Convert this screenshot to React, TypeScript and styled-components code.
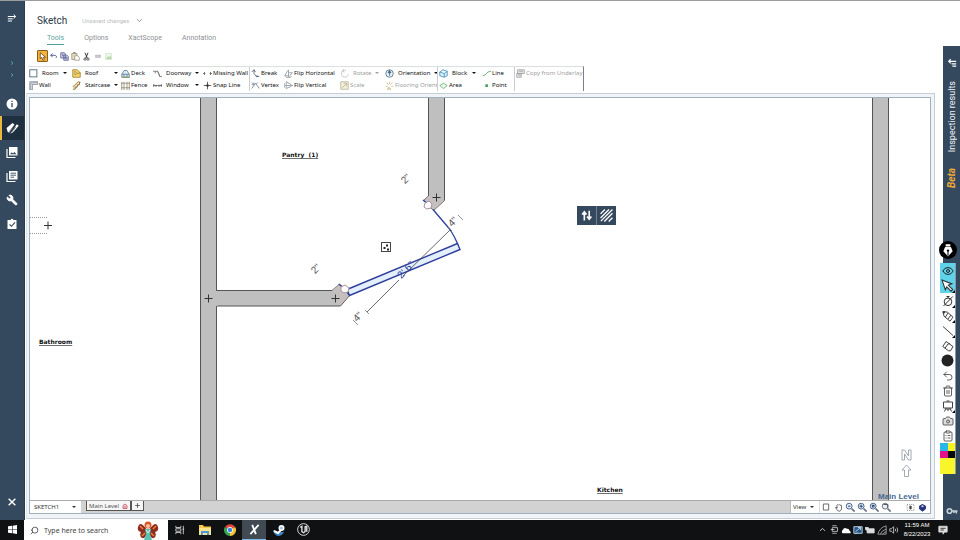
import React from "react";
import styled, { createGlobalStyle, css } from "styled-components";
import { Wrench, ChevronDown, ChevronUp, Trash2, Camera, ClipboardList, Eye, Undo2, Search } from "lucide-react";

const navy = "#34495e";
const ui = '"Noto Sans", "Open Sans", sans-serif';

const Global = createGlobalStyle`
  *, *::before, *::after { box-sizing: border-box; }
  html, body { margin: 0; height: 100%; overflow: hidden; }
  #root { height: 100%; }
  body { font-family: Roboto, sans-serif; background: #fff; }
  button, select, input { font: inherit; color: inherit; border: 0; padding: 0; margin: 0; background: none; border-radius: 0; }
  button { cursor: pointer; }
  svg { display: block; flex: none; }
`;

const Page = styled.div`
  height: 100vh;
  display: flex;
  flex-direction: column;
`;
const Workspace = styled.div`
  flex: 1;
  min-height: 0;
  display: flex;
  border-top: 1px solid #9a9c9e;
`;
const Rail = styled.nav`
  width: 25px;
  background: ${navy};
  color: #fff;
  display: flex;
  flex-direction: column;
  padding-bottom: 6px;
  border-right: 1px solid #2a3c4e;
`;
const RailButton = styled.button<{ $h?: number; $active?: boolean; $tint?: string }>`
  height: ${(p) => p.$h ?? 24}px;
  display: flex;
  align-items: center;
  justify-content: center;
  color: ${(p) => p.$tint ?? "#fff"};
  border-left: 2px solid transparent;
  border-right: 2px solid transparent;
  ${(p) => p.$active && css`
    background: #1e2f3f;
    border-left-color: #e8b93c;
    border-right-color: #1e2f3f;
  `}
`;
const RailGroup = styled.div`
  display: flex;
  flex-direction: column;
  padding-top: 22px;
  & + & { padding-top: 11px; }
`;
const Spacer = styled.div`
  flex: 1;
`;
const Center = styled.main`
  flex: 1;
  min-width: 0;
  display: flex;
  flex-direction: column;
`;
const TitleRow = styled.header`
  height: 28px;
  padding: 11px 0 0 12px;
  display: flex;
  align-items: center;
  gap: 15px;
`;
const Title = styled.h1`
  margin: 0;
  font-size: 10px;
  line-height: 16px;
  font-weight: 400;
  color: #2b3946;
`;
const SaveState = styled.button`
  display: flex;
  align-items: center;
  gap: 6px;
  font-size: 6px;
  color: #b9bcc0;
`;
const Tabs = styled.nav`
  height: 20px;
  padding: 4px 0 0 22px;
  display: flex;
  align-items: flex-start;
  gap: 20px;
`;
const Tab = styled.a<{ $on?: boolean }>`
  font-size: 7px;
  line-height: 11px;
  text-decoration: none;
  color: ${(p) => (p.$on ? "#5fa3a3" : "#8d9194")};
  border-bottom: 1px solid ${(p) => (p.$on ? "#4f9d9d" : "transparent")};
`;
const QuickBar = styled.div`
  height: 17px;
  padding: 0 0 3px 12px;
  display: flex;
  align-items: center;
`;
const QuickButton = styled.button<{ $on?: boolean }>`
  width: 11px;
  height: 12px;
  display: flex;
  align-items: center;
  justify-content: center;
  ${(p) => p.$on && css`
    background: #f3b13d;
    border: 1px solid #8a5d18;
    border-radius: 1px;
  `}
`;
const Ribbon = styled.div`
  height: 25px;
  display: flex;
  align-self: flex-start;
  margin-left: 3px;
  border-top: 1px solid #dcdfe2;
  border-right: 1px solid #7d7f82;
`;
const RibbonGroup = styled.div`
  display: flex;
  & + & { border-left: 1px solid #c9cdd1; }
`;
const RibbonColumn = styled.div<{ $w: number }>`
  width: ${(p) => p.$w}px;
  display: grid;
  grid-template-rows: 12px 12px;
`;
const RibbonButton = styled.button<{ $split?: boolean }>`
  display: flex;
  align-items: center;
  gap: ${(p) => (p.$split ? 4 : 1)}px;
  padding-left: 1px;
  font-family: ${ui};
  font-size: 6px;
  line-height: 12px;
  white-space: nowrap;
  color: #111;
  &:disabled { color: #a0a0a0; }
`;
const Caret = styled.span`
  margin-left: auto;
  margin-right: 5px;
  border: 2px solid transparent;
  border-top-color: currentColor;
  border-bottom: 0;
`;
const Frame = styled.section`
  flex: 1;
  min-height: 0;
  margin: 2px 8px 1px 1px;
  padding: 3px 3px 4px 2px;
  border: 1px solid #c3ced8;
  border-left-color: #dde4ea;
  background: #f1f4f7;
  display: flex;
`;
const FrameInner = styled.div`
  flex: 1;
  min-width: 0;
  border: 1px solid #9fb0bf;
  background: #fff;
  display: flex;
  flex-direction: column;
`;
const Canvas = styled.div`
  position: relative;
  flex: 1;
  min-height: 0;
  overflow: hidden;
`;
const Plan = styled.svg`
  width: 100%;
  height: 100%;
`;
const FloatBar = styled.div`
  position: absolute;
  left: 547px;
  top: 108px;
  display: flex;
  background: ${navy};
`;
const FloatButton = styled.button`
  width: 19px;
  height: 19px;
  display: flex;
  align-items: center;
  justify-content: center;
  color: #fff;
  & + & { width: 20px; border-left: 1px solid #73808c; }
`;
const StatusBar = styled.footer`
  height: 13px;
  display: flex;
  align-items: stretch;
  background: #d2d2d2;
  border-top: 1px solid #aaa;
  font-family: ${ui};
  font-size: 6px;
  color: #333;
`;
const SheetPicker = styled.label`
  display: flex;
  align-items: center;
  position: relative;
  width: 51px;
  margin-right: 5px;
  background: #fff;
  select { appearance: none; width: 100%; height: 100%; padding-left: 4px; outline: 0; }
`;
const PickerCaret = styled(Caret)`
  position: absolute;
  right: 0;
  pointer-events: none;
`;
const SheetTab = styled.button`
  display: flex;
  align-items: center;
  justify-content: center;
  gap: 3px;
  height: 10px;
  padding: 0 2px;
  background: #f6f6f6;
  border: 1px solid #555;
  border-top: 0;
  color: #555;
`;
const ViewTools = styled.div`
  margin-left: auto;
  width: 140px;
  padding-right: 2px;
  background: #fff;
  border-left: 1px solid #bbb;
  display: flex;
  align-items: center;
`;
const ViewButton = styled.button`
  width: 29px;
  height: 12px;
  padding-left: 2px;
  display: flex;
  align-items: center;
  border-right: 1px solid #ddd;
`;
const ViewIcon = styled.button`
  width: 12px;
  height: 12px;
  display: flex;
  align-items: center;
  justify-content: center;
`;
const ResultsRail = styled.aside`
  width: 17px;
  margin-top: 45px;
  background: ${navy};
  color: #fff;
  display: flex;
  flex-direction: column;
  align-items: center;
  padding: 12px 0 3px;
`;
const ResultsButton = styled.button`
  display: flex;
  flex-direction: column;
  align-items: center;
  gap: 13px;
`;
const Vertical = styled.span<{ $beta?: boolean }>`
  writing-mode: vertical-rl;
  transform: rotate(180deg);
  font-size: ${(p) => (p.$beta ? 10 : 9)}px;
  line-height: 12px;
  font-weight: ${(p) => (p.$beta ? 700 : 400)};
  font-style: ${(p) => (p.$beta ? "italic" : "normal")};
  color: ${(p) => (p.$beta ? "#e9a93a" : "#eef1f4")};
  margin-top: ${(p) => (p.$beta ? 3 : 0)}px;
`;
const Palette = styled.div`
  position: absolute;
  right: 4px;
  top: 241px;
  width: 16px;
  display: flex;
  flex-direction: column;
  align-items: center;
`;
const PaletteHandle = styled.button`
  width: 18px;
  height: 18px;
  margin-bottom: 4px;
  border-radius: 50%;
  background: #000;
  display: flex;
  align-items: center;
  justify-content: center;
`;
const PaletteList = styled.div`
  width: 100%;
  background: #fdfdfd;
  border-right: 1px solid #8a99a6;
`;
const PaletteTool = styled.button<{ $on?: boolean }>`
  width: 100%;
  height: 15px;
  display: flex;
  align-items: center;
  justify-content: center;
  position: relative;
  color: #444;
  background: ${(p) => (p.$on ? "#5fd3ea" : "transparent")};
`;
const Corner = styled.i`
  position: absolute;
  right: 0;
  bottom: 0;
  border-left: 3px solid transparent;
  border-bottom: 3px solid #000;
`;
const Swatches = styled.div`
  display: grid;
  grid-template-columns: 1fr 1fr;
  grid-template-rows: 8px 7px 16px;
`;
const Swatch = styled.button<{ $c: string; $wide?: boolean }>`
  background: ${(p) => p.$c};
  ${(p) => p.$wide && css`grid-column: span 2;`}
`;
const Taskbar = styled.footer`
  height: 20px;
  background: #101112;
  color: #fff;
  display: flex;
  align-items: stretch;
  font-family: ${ui};
`;
const TaskButton = styled.button<{ $w: number; $on?: boolean }>`
  width: ${(p) => p.$w}px;
  display: flex;
  align-items: center;
  justify-content: center;
  background: ${(p) => (p.$on ? "#414a52" : "transparent")};
  border-bottom: 1px solid ${(p) => (p.$on ? "#76b9ed" : "transparent")};
`;
const SearchBox = styled.label`
  width: 144px;
  padding: 0 9px 0 6px;
  background: #fff;
  color: #333;
  display: flex;
  align-items: center;
  gap: 5px;
  font-size: 7px;
  input { flex: 1; min-width: 0; outline: 0; }
  input::placeholder { color: #444; opacity: 1; }
`;
const Tray = styled.div`
  margin-left: auto;
  display: flex;
  align-items: stretch;
`;
const Clock = styled.button`
  width: 34px;
  margin-right: 2px;
  font-family: "Liberation Sans", sans-serif;
  font-size: 6px;
  line-height: 9px;
  text-align: center;
  display: flex;
  flex-direction: column;
  justify-content: center;
  align-items: center;
  white-space: nowrap;
`;

type DrawProps = { s?: number; w?: number; c?: string; children: React.ReactNode };
/* Small line drawings share a 12-unit grid. */
const Draw = ({ s = 9, w = 1, c = "currentColor", children }: DrawProps) => (
  <svg width={s} height={s} viewBox="0 0 12 12" fill="none" stroke={c} strokeWidth={w} aria-hidden="true">
    {children}
  </svg>
);

const MenuArrows = () => (
  <Draw s={10} w={1.2}>
    <path d="M1 4.2h9M8 1.8l2.5 2.4L8 6.6M1 7h6M1 9.6h5" />
  </Draw>
);

const icons: Record<string, React.ReactNode> = {
  room: <Draw c="#5f7488" w={1.3}><rect x="1" y="1" width="9.5" height="9.5" /></Draw>,
  wall: <Draw c="#6c7c8c"><path d="M2.500 12V2.500H12M1 1h11v3.500H4.500V12H1z" /></Draw>,
  roof: <Draw c="#9a7420"><path d="M1 1h6l4 4v6H1z" fill="#f5d667" /><path d="M4 3v5l3-2zM7 6l4-1" fill="#fff" /></Draw>,
  stairs: <Draw c="#8f6c3a"><path d="M1 11h3V8h3V5h3V1M1 8l7-7 3 1-7 9" fill="#eed69d" /></Draw>,
  deck: <Draw c="#4e7390"><path d="M1 7l3-5h4l3 5v4H1zM1 7h10M4 7v4M8 7v4" fill="#dcecf3" /><path d="M1 11h11" stroke="#85994b" /></Draw>,
  fence: <Draw c="#8c8268"><path d="M1 1v11M4 1v11M8 1v11M11 1v11M0 3h12M0 9h12" fill="#eee2bb" /></Draw>,
  door: <Draw c="#666"><path d="M0 3h3v3M3 3c4 0 5 3 6 7M6 2l3 8h3" /></Draw>,
  window: <Draw c="#555"><path d="M0 6h12M1 4v4M4 5v3M8 5v3M11 4v4" /></Draw>,
  missing: <Draw c="#555"><path d="M0 6h3M2 4v4M9 6h3M10 4v4" /></Draw>,
  snap: <Draw c="#333"><path d="M6 1v10M1 6h10" /><path d="M5 5h2v2H5z" fill="#333" /></Draw>,
  break: <Draw c="#445266"><path d="M1 4l3-3 2 3M4 1v5l3 4h4M8 8v3" /></Draw>,
  vertex: <Draw c="#65758a"><path d="M1 10l5-7 5 7M1 2l3 3M4 2v3H1M9 2l-2 2" /></Draw>,
  fliph: <Draw c="#7d8a95"><path d="M6 1v10M5 9H1l4-7M7 5h4l-4 5M2 10c2 2 6 2 8 0" /></Draw>,
  flipv: <Draw c="#7d8a95"><path d="M1 6h11M3 5V1l7 4M3 7v3l7-3M1 3c-1 2-1 4 0 6" /></Draw>,
  rotate: <Draw c="#bbb"><path d="M8 2a4.5 4.5 0 1 0 3 5M5 0L3 3l3 1" /></Draw>,
  scale: <Draw c="#b5ad94"><path d="M1 1h10v10H1zM3 9l6-6M5 3h4v4" fill="#f2efd9" /></Draw>,
  orient: <Draw c="#40617d"><circle cx="6" cy="6" r="5" fill="#e5f1f8" /><path d="M6 9V3M4 5l2-3 2 3z" fill="#24486b" /></Draw>,
  floor: <Draw c="#c9b98c"><path d="M2 2l3 3M6 1v3M10 2L7 5M1 7h3M8 7h3M3 11l2-3 3 3z" fill="#eee2bb" /></Draw>,
  block: <Draw c="#3686b5"><path d="M1 4l4-3 6 2v6l-4 2-6-2zM1 4l6 2 4-3M7 6v5" fill="#d9eff8" /></Draw>,
  area: <Draw c="#54ac67"><path d="M1 6l5-3 5 3-5 4z" fill="#ecf8ee" /></Draw>,
  line: <Draw c="#439d60"><path d="M1 9l3-1 4-4 4-1" /></Draw>,
  point: <Draw c="#439d60"><rect x="5" y="5" width="2.5" height="2.5" fill="#439d60" /></Draw>,
  copy: <Draw c="#999"><path d="M2 1h9v5H2zM1 6h6v5H1zM4 3h5M3 8h3" fill="#e5e5e5" /></Draw>,
};

type Item = { label: string; icon: string; split?: boolean; off?: boolean };
const ribbon: { w: number; items: Item[] }[][] = [
  [
    { w: 43, items: [{ label: "Room", icon: "room", split: true }, { label: "Wall", icon: "wall" }] },
    { w: 49, items: [{ label: "Roof", icon: "roof", split: true }, { label: "Staircase", icon: "stairs", split: true }] },
    { w: 32, items: [{ label: "Deck", icon: "deck" }, { label: "Fence", icon: "fence" }] },
    { w: 50, items: [{ label: "Doorway", icon: "door", split: true }, { label: "Window", icon: "window", split: true }] },
    { w: 47, items: [{ label: "Missing Wall", icon: "missing" }, { label: "Snap Line", icon: "snap" }] },
  ],
  [
    { w: 33, items: [{ label: "Break", icon: "break" }, { label: "Vertex", icon: "vertex" }] },
    { w: 56, items: [{ label: "Flip Horizontal", icon: "fliph" }, { label: "Flip Vertical", icon: "flipv" }] },
    { w: 45, items: [{ label: "Rotate", icon: "rotate", split: true, off: true }, { label: "Scale", icon: "scale", off: true }] },
    { w: 53, items: [{ label: "Orientation", icon: "orient", split: true }, { label: "Flooring Orient", icon: "floor", off: true }] },
  ],
  [
    { w: 43, items: [{ label: "Block", icon: "block", split: true }, { label: "Area", icon: "area" }] },
    { w: 33, items: [{ label: "Line", icon: "line" }, { label: "Point", icon: "point" }] },
  ],
  [{ w: 68, items: [{ label: "Copy from Underlay", icon: "copy", off: true }] }],
];

const Cross = ({ x, y }: { x: number; y: number }) => (
  <path d={`M${x - 4} ${y}h8M${x} ${y - 4}v8`} stroke="#333" fill="none" />
);
const Dim = ({ x, y, children, c = "#555" }: { x: number; y: number; children: string; c?: string }) => (
  <text x={x} y={y + 3} transform={`rotate(-45 ${x} ${y})`} textAnchor="middle" fontSize="10" fontFamily="Liberation Sans" fill={c}>
    {children}
  </text>
);
const RoomName = ({ x, y, children }: { x: number; y: number; children: string }) => (
  <text x={x} y={y} fontSize="6" fontWeight="700" fontFamily="DejaVu Sans, sans-serif" fill="#111" textDecoration="underline">
    {children}
  </text>
);

const FloorPlan = () => (
  <Plan viewBox="30 98 900 402" preserveAspectRatio="xMinYMin slice" role="img" aria-label="Floor plan">
    <g fill="#bfbfbf" stroke="#555">
      <path d="M200.5 90v420h16V90z" />
      <path d="M872.5 90v420h16V90z" />
      <path d="M216.5 290.5H332l7-6 10.500 11-9 10.500H216.500" />
      <path d="M428.500 90v106l-5 4.500 10 10 11-10V90z" />
    </g>
    <path d="M216.500 291v15" stroke="#bfbfbf" strokeWidth="2" />
    <path d="M332 290l7-6 10.500 11-9 10.500zM428.500 196l-5 4.500 10 10 11-10z" fill="#cbbfc0" opacity=".6" />
    <path d="M30 217.500h18M30 233.500h18" stroke="#999" strokeDasharray="1 1" />
    <Cross x={48} y={225.5} />
    <Cross x={208.5} y={298.5} />
    <Cross x={335.5} y={298.5} />
    <Cross x={436.5} y={197.5} />
    <path d="M347 289.500L457.500 243.500l2.500 6L349.500 295.500z" fill="#e3effa" stroke="#2e3f9c" strokeWidth="1.400" />
    <path d="M433 209.500l17 20q4 6 7.500 14M423 200l6 5M339 284l6 5 4 6" fill="none" stroke="#2e3f9c" strokeWidth="1.300" />
    <path d="M367 312l32-32M403 276l47-46" stroke="#444" strokeWidth=".8" />
    <path d="M365 310l4 4M448 227l4 4M353 320l5 5M458 215l5 5" stroke="#777" strokeWidth=".8" />
    <path d="M341 287l4-2 4 3-1 4-4 1-3-2zM425 203l4-2 3 3-1 4-4 1-3-2z" fill="#fff" stroke="#a98f9c" />
    <Dim x={406} y={179}>2"</Dim>
    <Dim x={316} y={269}>2"</Dim>
    <Dim x={358} y={317}>4"</Dim>
    <Dim x={453} y={222}>4"</Dim>
    <Dim x={406} y={270} c="#2e3f9c">2' 6"</Dim>
    <rect x="381.500" y="242.500" width="9" height="9" fill="#fff" stroke="#444" />
    <path d="M386 244.500h2v2h-2zM383.500 247h2v2h-2zM387 248.500h2v2h-2z" fill="#222" />
    <RoomName x={282} y={157}>{"Pantry\u00a0\u00a0(1)"}</RoomName>
    <RoomName x={39} y={344}>Bathroom</RoomName>
    <RoomName x={597} y={492}>Kitchen</RoomName>
    <g fill="#fff" stroke="#8b96a2" strokeWidth=".8">
      <path d="M902 460v-10h2.500l4 6v-6h2.500v10h-2.500l-4-6v6z" />
      <path d="M906.500 465l4.500 5h-2.500v6.500h-4V470H902z" />
    </g>
    <text x="878" y="499" fontSize="8" fontWeight="700" fontFamily="Liberation Sans" fill="#456a90">Main Level</text>
  </Plan>
);

const Lens = ({ mark, c = "#2e4a7d" }: { mark: string; c?: string }) => (
  <Draw s={10} c={c}>
    <circle cx="5" cy="5" r="3.500" fill="#e8f1f7" />
    <path d="M8 8l3.500 3.500" strokeWidth="2" stroke="#6d7486" />
    <path d={mark} strokeWidth="1.300" />
  </Draw>
);

export default function App() {
  return (
    <Page>
      <Global />
      <Workspace>
        <Rail aria-label="Project">
          <RailButton $h={34} aria-label="Expand menu"><MenuArrows /></RailButton>
          <RailGroup>
            {[0, 1].map((i) => (
              <RailButton key={i} $h={12} $tint="#4fa6c4" aria-label="Expand section">
                <Draw s={8} w={1.3}><path d="M4.500 3.500L7.500 6l-3 2.500" /></Draw>
              </RailButton>
            ))}
          </RailGroup>
          <RailGroup>
            <RailButton aria-label="Information">
              <Draw s={12} c="none">
                <circle cx="6" cy="6" r="5.500" fill="#fff" />
                <path d="M5.400 2.800h1.300v1.300H5.400zM5.400 5h1.300v4.200H5.400z" fill={navy} />
              </Draw>
            </RailButton>
            <RailButton $active aria-label="Sketch">
              <Draw s={13} c="none">
                <path d="M.5 5.500L6 1l2 1.500-5 7.500-1.500-1zM4 10.800L10 2l1.800 1.500L6.500 9.500z" fill="#fff" />
                <path d="M3 9l5.500-7M5 9.500l4-5" stroke="#1e2f3f" strokeWidth=".6" />
              </Draw>
            </RailButton>
            <RailButton aria-label="Images">
              <Draw s={12} c="none">
                <path d="M3 1h8.500v8.500H3z" fill="#fff" />
                <path d="M1 3v8.500h8.500" stroke="#fff" strokeWidth="1.200" />
                <path d="M4 8.200l1.800-2 1.200 1.200L8.500 6l2 2.200z" fill={navy} />
              </Draw>
            </RailButton>
            <RailButton aria-label="Notes">
              <Draw s={12} c="none">
                <path d="M3 1h8.500v8.500H3z" fill="#fff" />
                <path d="M1 3v8.500h8.500" stroke="#fff" strokeWidth="1.200" />
                <path d="M4.500 3.200H10M4.500 5.200H10M4.500 7.200H8" stroke={navy} strokeWidth=".9" />
              </Draw>
            </RailButton>
            <RailButton aria-label="Tools"><Wrench size={12} fill="#fff" strokeWidth={1.5} transform="scale(-1 1)" /></RailButton>
            <RailButton aria-label="Tasks">
              <Draw s={12} c="none">
                <path d="M1.500 2H4.500Q6-.5 7.500 2H10.500V11H1.500z" fill="#fff" />
                <path d="M3.500 6.300l2 2 3.500-4" stroke={navy} strokeWidth="1.100" />
              </Draw>
            </RailButton>
          </RailGroup>
          <Spacer />
          <RailButton aria-label="Close"><Draw s={10} w={1.700}><path d="M2 2l8 8M10 2l-8 8" /></Draw></RailButton>
        </Rail>

        <Center>
          <TitleRow>
            <Title>Sketch</Title>
            <SaveState>Unsaved changes <ChevronDown size={9} color="#777" /></SaveState>
          </TitleRow>
          <Tabs>
            <Tab href="#tools" $on>Tools</Tab>
            <Tab href="#options">Options</Tab>
            <Tab href="#xactscope">XactScope</Tab>
            <Tab href="#annotation">Annotation</Tab>
          </Tabs>
          <QuickBar role="toolbar" aria-label="Quick actions">
            <QuickButton $on aria-label="Select"><Draw s={9} c="#5e3c0c"><path d="M3 1v8l2-2 1.500 4 2-1L7 7h3z" fill="#fff" /></Draw></QuickButton>
            <QuickButton aria-label="Undo"><Draw s={8} c="#45508c" w={1.300}><path d="M4 2.500L1 5l3 2.500M1 5h7q3 1 1 4" /></Draw></QuickButton>
            <QuickButton aria-label="Copy"><Draw c="#4b528a"><path d="M1 1h5l1 1v6H1zM5 4h4l2 2v5H5z" fill="#d6daf0" /><path d="M6.500 7H10M6.500 9H10M2.500 3h2M2.500 5h2" /></Draw></QuickButton>
            <QuickButton aria-label="Paste"><Draw c="#91917c"><path d="M1 2h7v8H1z" fill="#e3ddb8" /><path d="M5 5h4l2 2v4H5z" fill="#fff" /><path d="M3 1h3" strokeWidth="2" /></Draw></QuickButton>
            <QuickButton aria-label="Cut"><Draw c="#333"><path d="M4 1l3 7M8 1L5 8" strokeWidth="1.300" /><circle cx="4" cy="9.500" r="1.500" /><circle cx="8" cy="9.500" r="1.500" /></Draw></QuickButton>
            <QuickButton aria-label="Find"><Draw s={6} c="#aaa9bb"><path d="M1 4h4v5H1zM7 4h4v5H7zM5 6h2" fill="#ccc" /></Draw></QuickButton>
            <QuickButton aria-label="Picture"><Draw s={7} c="#c5dfbd"><path d="M1 1h10v10H1z" fill="#eff8ea" /><path d="M2 10l3-4 2 2 2-3 2 5z" fill="#9bd08f" /></Draw></QuickButton>
          </QuickBar>
          <Ribbon role="toolbar" aria-label="Sketch tools">
            {ribbon.map((group, g) => (
              <RibbonGroup key={g}>
                {group.map((col, c) => (
                  <RibbonColumn key={c} $w={col.w}>
                    {col.items.map((it) => (
                      <RibbonButton key={it.label} $split={it.split} disabled={it.off}>
                        {icons[it.icon]}
                        {it.label}
                        {it.split && <Caret />}
                      </RibbonButton>
                    ))}
                  </RibbonColumn>
                ))}
              </RibbonGroup>
            ))}
          </Ribbon>

          <Frame>
            <FrameInner>
              <Canvas>
                <FloorPlan />
                <FloatBar>
                  <FloatButton aria-label="Flip opening">
                    <Draw s={13} w={1.500}><path d="M4 10.500V3M2 5l2-2.500L6 5M8.500 1.500V9M6.500 7l2 2.500 2-2.500" /></Draw>
                  </FloatButton>
                  <FloatButton aria-label="Hatch">
                    <Draw s={13} w={1.200}><path d="M.5 4.500l4-4M.5 8.300L8.300.5M.8 11.200L11.500.5M4 11.500L11.500 4M8 11.500L11.500 8" /></Draw>
                  </FloatButton>
                </FloatBar>
              </Canvas>
              <StatusBar>
                <SheetPicker>
                  <select aria-label="Sketch sheet" defaultValue="SKETCH1"><option>SKETCH1</option></select>
                  <PickerCaret />
                </SheetPicker>
                <SheetTab>Main Level <Draw s={6} w={1.500} c="#c2485a"><path d="M2 5l4-3 4 3v6H2z" fill="#f4d4d8" /><path d="M4 8h4" /></Draw></SheetTab>
                <SheetTab aria-label="Add level"><Draw s={7} w={1.500}><path d="M6 2v8M2 6h8" /></Draw></SheetTab>
                <ViewTools>
                  <ViewButton>View <Caret /></ViewButton>
                  <ViewIcon aria-label="Frame"><Draw s={8} c="#555" w={1.300}><path d="M2 1.500h8v9H2z" /></Draw></ViewIcon>
                  <ViewIcon aria-label="Pan"><Draw c="#444"><path d="M2 6q2-1 2 1V3q1-2 2 0 1-2 2 0 2-1 2 1v4q-1 3-3 3t-3-2z" /></Draw></ViewIcon>
                  <ViewIcon aria-label="Zoom out"><Lens mark="M3.500 5h3" /></ViewIcon>
                  <ViewIcon aria-label="Zoom in"><Lens mark="M3 5h4M5 3v4" /></ViewIcon>
                  <ViewIcon aria-label="Zoom extents"><Lens mark="M4 4h2v2H4z" /></ViewIcon>
                  <ViewIcon aria-label="Zoom window"><Lens c="#555a66" mark="M3 3h5v4" /></ViewIcon>
                  <ViewIcon aria-label="Layers" />
                  <ViewIcon aria-label="Center"><Draw s={9} c="#555"><path d="M1.500 2h9v8h-9z" strokeDasharray="1 1.500" /><path d="M5 4h2v4H5z" fill="#333" /></Draw></ViewIcon>
                  <ViewIcon aria-label="3D"><Draw s={9} c="#1f2c70"><path d="M2 4l4-2 4 2v4l-4 3-4-3z" fill="#26348a" /><path d="M2.500 4l3.500 2 3.500-2L6 2.500z" fill="#dfe3f7" /></Draw></ViewIcon>
                </ViewTools>
              </StatusBar>
            </FrameInner>
          </Frame>
        </Center>

        <ResultsRail>
          <ResultsButton>
            <Draw s={10} w={1.300}><path d="M11 4H2M4.500 1.500L2 4l2.500 2.500M11 7H5.500M11 9.700H6.500" /></Draw>
            <Vertical>Inspection results</Vertical>
            <Vertical $beta>Beta</Vertical>
          </ResultsButton>
          <Spacer />
          <Draw s={12} w={1.600} c="#c6d0d8"><circle cx="3.500" cy="6" r="2.300" /><path d="M6 6h5.500M10.300 6v2.500M8 6v2" /></Draw>
        </ResultsRail>
      </Workspace>

      <Palette role="toolbar" aria-label="Screen annotation">
        <PaletteHandle aria-label="Pen palette">
          <Draw s={14} c="none"><path d="M4 1h4v2H4zM3.500 3.500h5L10 7l-4 4.500L2 7z" fill="#fff" /><path d="M6 11V7" stroke="#000" strokeWidth=".9" /><circle cx="6" cy="6.500" r="1" fill="#000" /></Draw>
        </PaletteHandle>
        <PaletteList>
          <PaletteTool $on aria-label="Visibility"><Eye size={12} color="#222" /></PaletteTool>
          <PaletteTool $on aria-label="Cursor"><Draw s={13} c="#333"><path d="M1 1l9 3.500-3.200 1.300 4 4-1.500 1.500-4-4L4 10z" fill="#fff" /></Draw><Corner /></PaletteTool>
          <PaletteTool aria-label="Timer"><Draw s={12} c="#333"><circle cx="6" cy="6.800" r="3.800" /><path d="M4.500 1.500h3M1.500 11L10.800 1.500M6 1.500V3" /></Draw><Corner /></PaletteTool>
          <PaletteTool aria-label="Pencil"><Draw s={12} c="#444"><path d="M1 1.500l4.500.7 5.500 5-3 4-6-5zM3.500 7l2.500-4M6 9l3-4" /><path d="M1 1.500l2 .4-1.500 2z" fill="#000" /></Draw><Corner /></PaletteTool>
          <PaletteTool aria-label="Line"><Draw s={12} c="#444"><path d="M1 1.500l10 9" /></Draw><Corner /></PaletteTool>
          <PaletteTool aria-label="Eraser"><Draw s={12} c="#444"><path d="M4 1.500l7 5-2.500 4.300h-2L.8 6.500zM3 8.200L6 4l2-.5" /></Draw></PaletteTool>
          <PaletteTool aria-label="Pen size"><Draw s={13} c="none"><circle cx="6" cy="6" r="5.500" fill="#222" /></Draw></PaletteTool>
          <PaletteTool aria-label="Undo"><Undo2 size={12} strokeWidth={1.700} /></PaletteTool>
          <PaletteTool aria-label="Delete"><Trash2 size={12} strokeWidth={1.700} /></PaletteTool>
          <PaletteTool aria-label="Board"><Draw s={12} c="#444"><path d="M1.500 2h9v6h-9zM4 8l-1.500 3.500M8 8l1.500 3.500M4.500 1h3M5 8v2h2V8" /></Draw><Corner /></PaletteTool>
          <PaletteTool aria-label="Screenshot"><Camera size={12} strokeWidth={1.700} fill="#ddd" /></PaletteTool>
          <PaletteTool aria-label="Clipboard"><ClipboardList size={12} strokeWidth={1.700} /></PaletteTool>
          <Swatches>
            <Swatch $c="#27b7e8" aria-label="Cyan" />
            <Swatch $c="#f6f321" aria-label="Yellow" />
            <Swatch $c="#e3128b" aria-label="Magenta" />
            <Swatch $c="#0b0b0b" aria-label="Black" />
            <Swatch $c="#f8f62a" $wide aria-label="Current color" />
          </Swatches>
        </PaletteList>
      </Palette>

      <Taskbar>
        <TaskButton $w={24} aria-label="Start"><Draw s={9} c="none"><path d="M0 1.700L5.500 1v4.700H0zM6.300.9L12 0v5.700H6.300zM0 6.400h5.500V11L0 10.300zM6.300 6.400H12V12l-5.700-.9z" fill="#fff" /></Draw></TaskButton>
        <SearchBox>
          <Search size={9} transform="scale(-1 1)" />
          <input type="text" aria-label="Search" placeholder="Type here to search" />
          <svg width="22" height="19" viewBox="0 0 22 19" aria-hidden="true">
            <path d="M10 9Q3-1 1 6q-1 4 3 5-2 4 1 6 4 1 5-6zM12 9q7-10 9-3 1 4-3 5 2 4-1 6-4 1-5-6z" fill="#8e2a20" />
            <path d="M3 5l3 3M19 5l-3 3M5 15l3-3M17 15l-3-3" stroke="#e8843a" strokeWidth="1.500" />
            <circle cx="11" cy="4" r="3.500" fill="#d8562c" />
            <circle cx="11" cy="5" r="2" fill="#f3c39b" />
            <path d="M8 8h6l-1 5 2 6H7l2-6z" fill="#58c3b2" />
            <path d="M9 9l2 3 2-3" stroke="#d9f2ea" fill="none" />
          </svg>
        </SearchBox>
        <TaskButton $w={24} aria-label="Task view"><Draw s={10} c="#ddd"><path d="M1 1v2h6V1M1 4.500h6v3H1zM1 11V9h6v2M10 1v10M9 5h2" /></Draw></TaskButton>
        <TaskButton $w={25} aria-label="File Explorer"><Draw s={12} c="none"><path d="M0 1h4l1 1.500h7V11H0z" fill="#f3c84b" /><path d="M0 4h12v7H0z" fill="#fbe28c" /><path d="M2 11V7h8v4H8V9H4v2z" fill="#4b9bd8" /></Draw></TaskButton>
        <TaskButton $w={25} aria-label="Chrome">
          <Draw s={12} c="none">
            <path d="M6 6L1 3a6 6 0 0 1 10.200 0z" fill="#e3483c" />
            <path d="M6 6L.8 3A6 6 0 0 0 6 12z" fill="#35a353" />
            <path d="M6 6h0l5.200-3A6 6 0 0 1 6 12z" fill="#f5c630" />
            <circle cx="6" cy="6" r="2.900" fill="#fff" />
            <circle cx="6" cy="6" r="2.200" fill="#3f7fe8" />
          </Draw>
        </TaskButton>
        <TaskButton $w={24} $on aria-label="Xactimate"><Draw s={11} c="#fff"><path d="M3.500 1l4 10M10.500 1L1.500 11" strokeWidth="2" /></Draw></TaskButton>
        <TaskButton $w={25} aria-label="Steam"><Draw s={12} c="none"><path d="M0 6l5 2 6 0q-2 4-6 4-4-1-5-6z" fill="#3d86c8" /><path d="M1 7l4 2 4-4" stroke="#fff" strokeWidth="2" /><circle cx="8.500" cy="4" r="3" fill="#fff" /><circle cx="8.500" cy="4" r="1.500" fill="#9cc3e6" /></Draw></TaskButton>
        <TaskButton $w={24} aria-label="Unreal Engine"><Draw s={13} c="#ddd" w={0.900}><circle cx="6" cy="6" r="5.400" /><path d="M3 4l1.500-1v5L6 9l1.500-1V3.500L9 3v5" strokeWidth="1.300" /></Draw></TaskButton>
        <Tray>
          <TaskButton $w={12} aria-label="Show hidden icons"><ChevronUp size={9} /></TaskButton>
          <TaskButton $w={12} aria-label="Device"><Draw s={9} c="#ddd"><path d="M3 1h6M3 11h6M3 3.500h7v5H3zM1 6h5" /></Draw></TaskButton>
          <TaskButton $w={12} aria-label="Cloud"><Draw s={10} c="none"><path d="M2 10a2.500 2.500 0 0 1 0-4Q4 2 7 4.500q3-.5 3 2 2 .5 1.500 3.500z" fill="#fff" /></Draw></TaskButton>
          <TaskButton $w={12} aria-label="Sync"><Draw s={10} c="#cfe2f2"><path d="M1 2h10v8H1z" fill="#28578a" /><path d="M3 8l6-5M6 3h3v3M3 11l2-2" /></Draw></TaskButton>
          <TaskButton $w={12} aria-label="Power"><Draw s={10} c="#ddd"><path d="M2.500 4.500h8.500v5H2.500z" fill="#ddd" /><path d="M0 3h4v3H1z" fill="#ddd" /></Draw></TaskButton>
          <TaskButton $w={12} aria-label="Network"><Draw s={10} c="#aaa"><path d="M1 11Q3 3 11 1v10zM4 11q1-4 7-6M7 11q1-2 4-3" /></Draw></TaskButton>
          <TaskButton $w={12} aria-label="Volume"><Draw s={10} c="#ccc"><path d="M1 4.500h2l2.500-2.500v8L3 7.500H1zM7.500 4.500q1 1.500 0 3M9.500 3q2 3 0 6" /></Draw></TaskButton>
          <Clock><span>11:59 AM</span><span>8/22/2023</span></Clock>
          <TaskButton $w={14} aria-label="Notifications"><Draw s={10} c="#ddd"><path d="M1 1.500h10v7H8l-2 2.500v-2.500H1z" fill="#ddd" /><path d="M3 4h6M3 6h4" stroke="#222" /></Draw></TaskButton>
          <TaskButton $w={10} aria-label="Show desktop" />
        </Tray>
      </Taskbar>
    </Page>
  );
}
